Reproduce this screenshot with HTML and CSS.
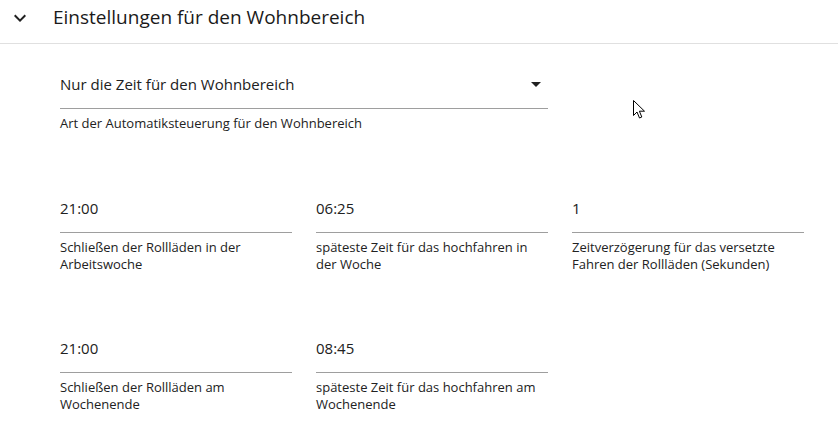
FILE: index.html
```html
<!DOCTYPE html>
<html lang="de">
<head>
    <meta charset="UTF-8">
    <meta name="viewport" content="width=device-width, initial-scale=1.0">
    <title>Einstellungen für den Wohnbereich</title>
    <link rel="stylesheet" href="styles.css">
</head>
<body>
    <div class="panel">
        <div class="panel-header">
            <svg class="chevron" width="12" height="8" viewBox="0 0 12 8">
                <path d="M1.4 0.6 L6 5.2 L10.6 0.6 L12 2 L6 8 L0 2 Z" fill="#212121"/>
            </svg>
            <span class="panel-title">Einstellungen für den Wohnbereich</span>
        </div>

        <div class="panel-body">
            <div class="field field-select">
                <div class="field-input">
                    <span>Nur die Zeit für den Wohnbereich</span>
                    <span class="select-arrow"></span>
                </div>
                <div class="field-hint">Art der Automatiksteuerung für den Wohnbereich</div>
            </div>

            <div class="field">
                <div class="field-input">21:00</div>
                <div class="field-hint">Schließen der Rollläden in der Arbeitswoche</div>
            </div>
            <div class="field">
                <div class="field-input">06:25</div>
                <div class="field-hint">späteste Zeit für das hochfahren in der Woche</div>
            </div>
            <div class="field">
                <div class="field-input">1</div>
                <div class="field-hint">Zeitverzögerung für das versetzte Fahren der Rollläden (Sekunden)</div>
            </div>

            <div class="field">
                <div class="field-input">21:00</div>
                <div class="field-hint">Schließen der Rollläden am Wochenende</div>
            </div>
            <div class="field">
                <div class="field-input">08:45</div>
                <div class="field-hint">späteste Zeit für das hochfahren am Wochenende</div>
            </div>
        </div>
    </div>

    <svg class="cursor" width="13" height="20" viewBox="0 0 13 20">
        <path d="M0.5 0.5 L0.5 15.5 L4 12 L6.5 18 L8.8 17 L6.4 11.2 L11.5 11.2 Z" fill="#fff" stroke="#000" stroke-width="1" stroke-linejoin="miter"/>
    </svg>
</body>
</html>
```

FILE: styles.css
```css
body {
    margin: 0;
    font-family: "Open Sans", "Noto Sans", Arial, sans-serif;
    color: #212121;
    background-color: #fff;
}

.panel-header {
    display: flex;
    align-items: center;
    height: 43px;
    padding-left: 14px;
    border-bottom: 1px solid #e0e0e0;
}

.chevron {
    margin-top: -8px;
}

.panel-title {
    margin-left: 27px;
    margin-top: -9px;
    font-size: 19px;
    color: #1a1a1a;
}

.panel-body {
    display: grid;
    grid-template-columns: repeat(3, 232px);
    column-gap: 24px;
    row-gap: 63px;
    padding: 28px 0 0 60px;
}

.field-select {
    grid-column: span 2;
    margin-bottom: 1px;
}

.field-select + .field {
    grid-column: 1;
}

.field-input {
    display: flex;
    align-items: center;
    justify-content: space-between;
    height: 24px;
    padding-bottom: 12px;
    border-bottom: 1px solid #9e9e9e;
    font-size: 15px;
    line-height: 24px;
}

.select-arrow {
    width: 0;
    height: 0;
    margin-right: 7px;
    border-left: 5px solid transparent;
    border-right: 5px solid transparent;
    border-top: 5px solid #212121;
}

.field-hint {
    margin-top: 6px;
    font-size: 13px;
    line-height: 17px;
    color: #222;
}

.cursor {
    position: absolute;
    left: 633px;
    top: 100px;
}
```
